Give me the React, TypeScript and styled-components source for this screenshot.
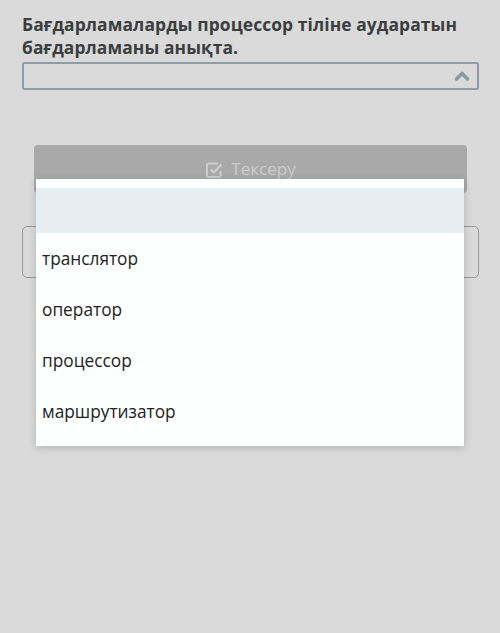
import React from 'react';
import styled, { createGlobalStyle } from 'styled-components';

const GlobalStyle = createGlobalStyle`
  html, body {
    margin: 0;
    padding: 0;
    background: #dadada;
  }
  body {
    font-family: "Open Sans", "Noto Sans", sans-serif;
  }
`;

const Page = styled.div`
  position: relative;
  width: 500px;
  height: 633px;
  overflow: hidden;
  background: #dadada;
  box-sizing: border-box;
  padding: 13px 21px 0 22px;
`;

const Question = styled.h1`
  margin: 0;
  font-size: 17.4px;
  line-height: 23px;
  font-weight: 700;
  color: #3b3d3f;
  letter-spacing: 0.1px;
`;

const SelectBox = styled.div`
  margin-top: 3px;
  height: 28px;
  box-sizing: border-box;
  border: 2px solid #8e9da2;
  border-radius: 2px;
  display: flex;
  align-items: center;
  justify-content: flex-end;
  padding-right: 7px;
`;

const CheckButton = styled.div`
  margin: 55px 12px 0 12px;
  height: 48px;
  background: #a9a9a9;
  border-radius: 4px;
  display: flex;
  justify-content: center;
  padding-top: 14px;
  box-sizing: border-box;
  gap: 8px;
  color: #cdcdcd;
  font-size: 17px;
  line-height: 20px;
`;

const AnswerBox = styled.div`
  margin-top: 33px;
  height: 50px;
  border: 1px solid #9a9a9a;
  border-radius: 5px;
`;

const Dropdown = styled.ul`
  position: absolute;
  left: 36px;
  top: 179px;
  width: 428px;
  margin: 0;
  padding: 9px 0;
  list-style: none;
  background: #fdfefe;
  box-shadow: 0 2px 8px rgba(0, 0, 0, 0.18);
`;

const Option = styled.li<{ $active?: boolean; $h: number }>`
  height: ${p => p.$h}px;
  display: flex;
  align-items: center;
  padding-left: 6px;
  font-size: 17.3px;
  color: #222;
  background: ${p => (p.$active ? '#e7eef1' : 'transparent')};
`;

const Chevron = () => (
  <svg width="16" height="12" viewBox="0 0 16 12">
    <path d="M2.5 9 L8 3.5 L13.5 9" fill="none" stroke="#889a9f" strokeWidth="3.6" strokeLinecap="round" strokeLinejoin="round" />
  </svg>
);

const CheckIcon = () => (
  <svg width="18" height="18" viewBox="0 0 18 18" style={{ marginTop: 2 }}>
    <path d="M13 2.5 H3.5 a1.5 1.5 0 0 0 -1.5 1.5 V14.5 a1.5 1.5 0 0 0 1.5 1.5 H14 a1.5 1.5 0 0 0 1.5 -1.5 V10" fill="none" stroke="#cdcdcd" strokeWidth="2" />
    <path d="M5.5 8.5 L8.5 11.5 L16.5 3.5" fill="none" stroke="#cdcdcd" strokeWidth="2.4" />
  </svg>
);

const options = ['транслятор', 'оператор', 'процессор', 'маршрутизатор'];

export default function App() {
  return (
    <>
      <GlobalStyle />
      <Page>
        <Question>Бағдарламаларды процессор тіліне аударатын бағдарламаны анықта.</Question>
        <SelectBox>
          <Chevron />
        </SelectBox>
        <CheckButton>
          <CheckIcon />
          <span>Тексеру</span>
        </CheckButton>
        <AnswerBox />
        <Dropdown>
          <Option $active $h={45} />
          {options.map(o => (
            <Option key={o} $h={51}>{o}</Option>
          ))}
        </Dropdown>
      </Page>
    </>
  );
}
